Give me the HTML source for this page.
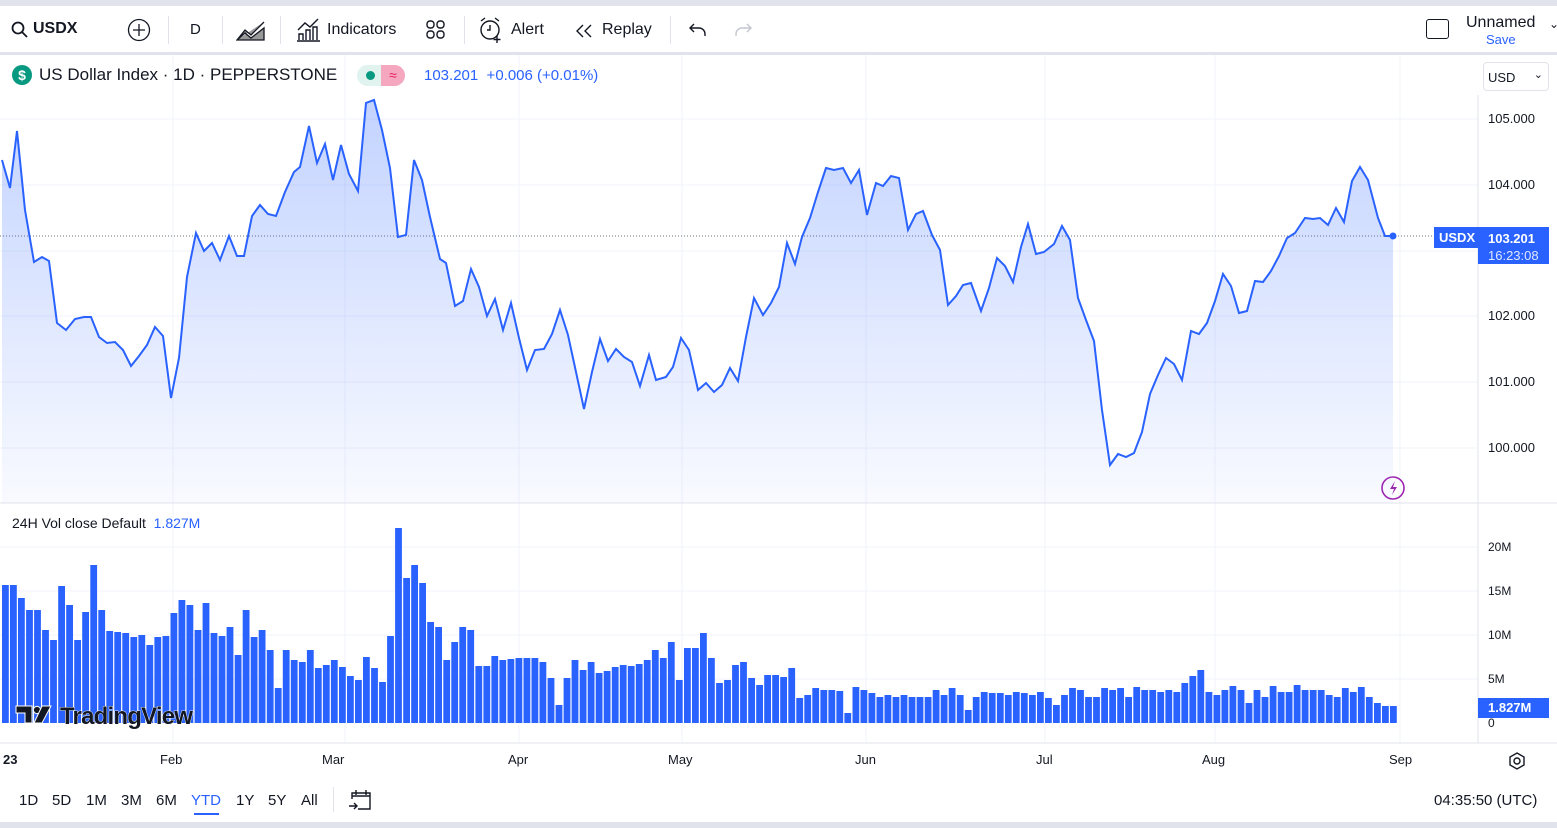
<!DOCTYPE html>
<html><head><meta charset="utf-8"><style>
*{margin:0;padding:0;box-sizing:border-box}
body{width:1557px;height:828px;background:#e0e3eb;font-family:"Liberation Sans",sans-serif;color:#131722;position:relative;overflow:hidden}
.top{position:absolute;left:0;top:6px;width:1557px;height:46px;background:#fff}
.main{position:absolute;left:0;top:55px;width:1557px;height:722px;background:#fff}
.bot{position:absolute;left:0;top:777px;width:1557px;height:45px;background:#fff}
.t{position:absolute;font-size:16px;white-space:nowrap}
.sep{position:absolute;top:10px;width:1px;height:28px;background:#e0e3eb}
.ax{position:absolute;font-size:13px;color:#131722}
</style></head><body>
<div class="top">
 <svg style="position:absolute;left:11px;top:15px" width="18" height="18" viewBox="0 0 18 18"><circle cx="7" cy="7" r="5.5" fill="none" stroke="#131722" stroke-width="1.8"/><path d="M11 11l5 5" stroke="#131722" stroke-width="1.8"/></svg>
 <div class="t" style="left:33px;top:14px;font-weight:bold">USDX</div>
 <svg style="position:absolute;left:127px;top:12px" width="24" height="24"><circle cx="12" cy="12" r="10.5" fill="none" stroke="#131722" stroke-width="1.3"/><path d="M12 6v12M6 12h12" stroke="#131722" stroke-width="1.3"/></svg>
 <div class="sep" style="left:168px"></div>
 <div class="t" style="left:190px;top:15px;font-size:15px">D</div>
 <div class="sep" style="left:222px"></div>
 <svg style="position:absolute;left:236px;top:14px" width="30" height="22"><path d="M1 20L9 10L15 15L28 2M1 20L28 20L28 8L15 18L9 13Z" fill="#999" stroke="#131722" stroke-width="1.3"/></svg>
 <div class="sep" style="left:280px"></div>
 <svg style="position:absolute;left:296px;top:12px" width="26" height="24"><path d="M2 12L9 5L14 9L22 1M3 22V16h4v6M10 22V12h4v10M17 22V9h4v13M1 23h23" fill="none" stroke="#131722" stroke-width="1.4"/></svg>
 <div class="t" style="left:327px;top:15px">Indicators</div>
 <svg style="position:absolute;left:425px;top:13px" width="22" height="22"><g fill="none" stroke="#131722" stroke-width="1.4"><rect x="2" y="2" width="7" height="7" rx="3"/><rect x="12" y="2" width="7" height="7" rx="3"/><rect x="2" y="12" width="7" height="7" rx="3"/><rect x="12" y="12" width="7" height="7" rx="3"/></g></svg>
 <div class="sep" style="left:464px"></div>
 <svg style="position:absolute;left:478px;top:10px" width="28" height="28"><g fill="none" stroke="#131722" stroke-width="1.4"><circle cx="12" cy="14" r="9"/><path d="M12 9v5h-3M3 5l4-3M21 5l-4-3M19 20v7M15.5 23.5h7"/></g></svg>
 <div class="t" style="left:511px;top:15px">Alert</div>
 <svg style="position:absolute;left:574px;top:17px" width="22" height="16"><path d="M9 2L3 8l6 6M17 2l-6 6 6 6" fill="none" stroke="#131722" stroke-width="1.4"/></svg>
 <div class="t" style="left:602px;top:15px">Replay</div>
 <div class="sep" style="left:670px"></div>
 <svg style="position:absolute;left:688px;top:16px" width="20" height="16"><path d="M6 2L2 6l4 4M2 6h9a6 6 0 016 6v2" fill="none" stroke="#131722" stroke-width="1.4"/></svg>
 <svg style="position:absolute;left:733px;top:16px" width="20" height="16"><path d="M14 2l4 4-4 4M18 6H9a6 6 0 00-6 6v2" fill="none" stroke="#c3c6ce" stroke-width="1.4"/></svg>
 <div style="position:absolute;left:1426px;top:13px;width:23px;height:20px;border:1.6px solid #131722;border-radius:3px"></div>
 <div class="t" style="left:1466px;top:8px">Unnamed</div>
 <div class="t" style="left:1486px;top:26px;font-size:13px;color:#2962ff">Save</div>
 <div class="t" style="left:1549px;top:11px;font-size:12px">⌄</div>
</div>
<div class="main">
<svg style="position:absolute;left:0;top:0" width="1557" height="722" viewBox="0 55 1557 722">
<defs><linearGradient id="g" x1="0" y1="0" x2="0" y2="1"><stop offset="0" stop-color="#2962ff" stop-opacity="0.28"/><stop offset="1" stop-color="#2962ff" stop-opacity="0.03"/></linearGradient></defs>
<g stroke="#f0f3fa" stroke-width="1">
<path d="M0 119H1478M0 185H1478M0 251H1478M0 316H1478M0 382H1478M0 448H1478M0 547H1478M0 591H1478M0 635H1478M0 679H1478"/>
<path d="M173 55V743M345 55V743M519 55V743M682 55V743M866 55V743M1045 55V743M1215 55V743M1400 55V743"/>
</g>
<path d="M0 503H1557M0 743H1557M1478 95V743" stroke="#e0e3eb"/>
<path d="M0 236H1478" stroke="#131722" stroke-width="1" stroke-dasharray="1 2" opacity="0.6"/>
<polygon id="fill" fill="url(#g)"/>
<polyline id="pl" fill="none" stroke="#2962ff" stroke-width="2"/>
<circle cx="1393" cy="236" r="3.5" fill="#2962ff"/>
<g id="bars" fill="#2962ff"></g>
<g transform="translate(16,706)">
<path d="M0 0h16v17h-7v-10h-9z" fill="#131722" stroke="#fff" stroke-width="1"/>
<circle cx="21" cy="4" r="3.6" fill="#131722" stroke="#fff" stroke-width="1"/>
<path d="M26 0h9l-9 17h-8z" fill="#131722" stroke="#fff" stroke-width="1"/>
<text x="44" y="18" font-family="Liberation Sans,sans-serif" font-size="24" font-weight="bold" fill="#131722" stroke="#fff" stroke-width="0.8" paint-order="stroke" letter-spacing="-0.8">TradingView</text>
</g>
<circle cx="1393" cy="488" r="11" fill="none" stroke="#9c27b0" stroke-width="1.6"/>
<path d="M1395 481l-5 8h4l-2 6 5-8h-4z" fill="#9c27b0"/>
</svg>
<div style="position:absolute;left:12px;top:10px;width:20px;height:20px;border-radius:50%;background:#089981;color:#fff;font-size:14px;font-weight:bold;text-align:center;line-height:20px">$</div>
<div class="t" style="left:39px;top:10px;font-size:17px">US Dollar Index · 1D · PEPPERSTONE</div>
<div style="position:absolute;left:357px;top:10px;width:48px;height:21px;border-radius:11px;background:#e0f3ef;overflow:hidden"><div style="position:absolute;left:9px;top:6px;width:9px;height:9px;border-radius:50%;background:#089981"></div><div style="position:absolute;left:24px;top:0;width:24px;height:21px;background:#f4a7bf;color:#e91e63;text-align:center;font-size:14px;line-height:21px">≈</div></div>
<div class="t" style="left:424px;top:12px;font-size:15px;color:#2962ff">103.201 &nbsp;+0.006 (+0.01%)</div>
<div style="position:absolute;left:1483px;top:7px;width:66px;height:29px;border:1px solid #e0e3eb;border-radius:4px;font-size:13px;padding:7px 4px">USD<span style="position:absolute;right:5px;top:5px;font-size:11px">⌄</span></div>
<div class="ax" style="left:1488px;top:56px">105.000</div>
<div class="ax" style="left:1488px;top:122px">104.000</div>
<div class="ax" style="left:1488px;top:253px">102.000</div>
<div class="ax" style="left:1488px;top:319px">101.000</div>
<div class="ax" style="left:1488px;top:385px">100.000</div>
<div style="position:absolute;left:1434px;top:172px;width:44px;height:21px;background:#2962ff;color:#fff;font-size:13px;font-weight:bold;padding:3px 5px">USDX</div>
<div style="position:absolute;left:1478px;top:172px;width:71px;height:37px;background:#2962ff;color:#fff;font-size:13px;font-weight:bold;padding:3px 10px;line-height:17px">103.201<br><span style="font-weight:normal;color:#dfe6ff">16:23:08</span></div>
<div class="t" style="left:12px;top:460px;font-size:14px">24H Vol close Default <span style="color:#2962ff">&nbsp;1.827M</span></div>
<div class="ax" style="left:1488px;top:485px;font-size:12px">20M</div>
<div class="ax" style="left:1488px;top:529px;font-size:12px">15M</div>
<div class="ax" style="left:1488px;top:573px;font-size:12px">10M</div>
<div class="ax" style="left:1488px;top:617px;font-size:12px">5M</div>
<div class="ax" style="left:1488px;top:661px;font-size:12px">0</div>
<div style="position:absolute;left:1478px;top:643px;width:71px;height:20px;background:#2962ff;color:#fff;font-size:13px;font-weight:bold;padding:2px 10px">1.827M</div>
<div class="ax" style="left:3px;top:697px;font-weight:bold">23</div>
<div class="ax" style="left:160px;top:697px">Feb</div>
<div class="ax" style="left:322px;top:697px">Mar</div>
<div class="ax" style="left:508px;top:697px">Apr</div>
<div class="ax" style="left:668px;top:697px">May</div>
<div class="ax" style="left:855px;top:697px">Jun</div>
<div class="ax" style="left:1036px;top:697px">Jul</div>
<div class="ax" style="left:1202px;top:697px">Aug</div>
<div class="ax" style="left:1389px;top:697px">Sep</div>
<svg style="position:absolute;left:1507px;top:696px" width="20" height="20"><circle cx="10" cy="10" r="3" fill="none" stroke="#131722" stroke-width="1.4"/><path d="M10 2l7 4v8l-7 4-7-4V6z" fill="none" stroke="#131722" stroke-width="1.4"/></svg>
</div>
<div class="bot">
 <div class="t" style="left:19px;top:15px;font-size:15px">1D</div>
 <div class="t" style="left:52px;top:15px;font-size:15px">5D</div>
 <div class="t" style="left:86px;top:15px;font-size:15px">1M</div>
 <div class="t" style="left:121px;top:15px;font-size:15px">3M</div>
 <div class="t" style="left:156px;top:15px;font-size:15px">6M</div>
 <div class="t" style="left:191px;top:15px;font-size:15px;color:#2962ff">YTD</div>
 <div style="position:absolute;left:194px;top:36px;width:25px;height:2px;background:#2962ff"></div>
 <div class="t" style="left:236px;top:15px;font-size:15px">1Y</div>
 <div class="t" style="left:268px;top:15px;font-size:15px">5Y</div>
 <div class="t" style="left:301px;top:15px;font-size:15px">All</div>
 <div class="sep" style="left:333px;top:10px;height:25px"></div>
 <svg style="position:absolute;left:348px;top:10px" width="26" height="26"><path d="M4 12V6h18v16H10M4 9h18M8 3v5M18 3v5M1 19h8M6 16l3 3-3 3" fill="none" stroke="#131722" stroke-width="1.4"/></svg>
 <div class="t" style="left:1434px;top:15px;font-size:15px">04:35:50 (UTC)</div>
</div>
<script>
var p=[[2,160],[10,188],[17,131],[25,210],[34,262],[42,257],[49,261],[57,323],[66,330],[75,319],[84,317],[91,317],[99,337],[107,343],[115,342],[123,350],[131,366],[139,356],[147,345],[155,327],[163,336],[171,398],[179,358],[187,277],[196,233],[204,251],[212,243],[220,260],[229,236],[237,256],[244,256],[252,216],[260,205],[268,214],[276,216],[285,192],[294,172],[300,167],[309,126],[317,163],[325,144],[333,180],[341,145],[349,174],[358,191],[366,103],[374,100],[382,130],[390,168],[398,237],[406,235],[414,160],[422,180],[430,217],[440,259],[446,263],[455,306],[463,301],[471,269],[479,287],[487,316],[495,299],[503,330],[511,303],[519,338],[527,370],[535,350],[544,349],[552,334],[560,310],[568,335],[576,372],[584,409],[592,372],[600,339],[608,361],[616,349],[624,357],[632,362],[640,386],[649,355],[656,380],[666,377],[673,367],[681,338],[689,350],[698,390],[706,383],[714,392],[722,385],[730,368],[738,381],[746,337],[754,298],[763,315],[771,303],[779,287],[787,243],[795,264],[802,237],[810,218],[818,192],[826,168],[834,170],[843,168],[851,183],[859,170],[867,215],[876,183],[883,186],[891,176],[899,178],[908,230],[916,214],[923,211],[932,235],[940,250],[948,305],[956,296],[963,285],[971,283],[981,311],[989,288],[997,258],[1005,266],[1013,282],[1021,247],[1028,224],[1036,254],[1044,252],[1054,244],[1062,226],[1070,240],[1078,298],[1086,320],[1094,341],[1102,410],[1110,465],[1118,454],[1126,457],[1134,453],[1142,432],[1150,394],[1158,375],[1166,358],[1174,364],[1182,380],[1191,331],[1199,334],[1207,323],[1215,301],[1223,274],[1231,286],[1239,313],[1247,311],[1255,281],[1263,282],[1271,271],[1279,256],[1287,238],[1295,233],[1305,218],[1313,219],[1320,218],[1328,225],[1336,208],[1344,222],[1352,181],[1360,167],[1368,180],[1378,218],[1385,236],[1393,236]];
var s=p.map(function(a){return a.join(',')}).join(' ');
document.getElementById('pl').setAttribute('points',s);
document.getElementById('fill').setAttribute('points','2,503 '+s+' 1393,503');
var v=[585,585,598,610,610,630,640,586,605,640,612,565,610,631,632,633,637,635,645,637,636,613,600,605,630,603,633,636,627,655,610,637,630,650,688,650,660,662,650,668,665,660,667,676,680,657,668,682,636,528,578,565,583,622,627,660,642,627,630,666,666,656,660,659,658,658,658,662,678,705,678,660,670,662,673,671,667,665,666,664,660,650,658,642,680,648,648,633,658,683,680,665,662,678,685,675,675,677,668,698,695,688,690,690,691,713,687,690,693,697,695,697,695,697,697,697,690,695,688,695,710,697,692,693,693,695,692,693,695,692,698,705,695,688,690,697,697,688,690,688,697,687,690,690,692,690,692,683,676,670,692,695,690,686,690,703,690,697,686,692,692,685,690,690,690,695,697,688,692,687,697,703,706,706];
var sp=(1390-2)/(v.length-1);
var h='';for(var i=0;i<v.length;i++){var x=2+i*sp;h+='<rect x="'+x.toFixed(1)+'" y="'+v[i]+'" width="'+(sp-1.2).toFixed(1)+'" height="'+(723-v[i])+'"/>';}
document.getElementById('bars').innerHTML=h;
</script>
</body></html>
